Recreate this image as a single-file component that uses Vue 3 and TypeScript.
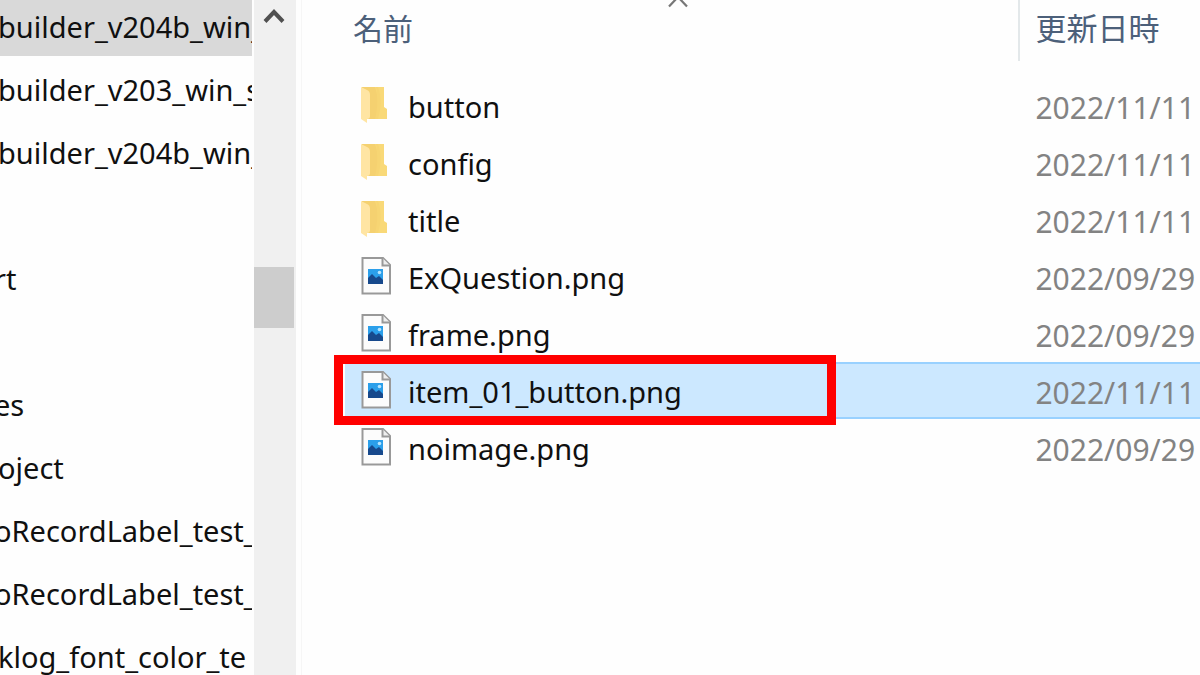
<script setup lang="ts">
interface TreeRow {
  label: string
  clipped?: boolean
  selected?: boolean
}
interface FileRow {
  name: string
  kind: 'folder' | 'image'
  date: string
  selected?: boolean
}

const tree: TreeRow[] = [
  { label: 'builder_v204b_win_', selected: true },
  { label: 'builder_v203_win_s' },
  { label: 'builder_v204b_win_' },
  { label: '' },
  { label: 'rt', clipped: true },
  { label: '' },
  { label: 'es', clipped: true },
  { label: 'oject' },
  { label: 'oRecordLabel_test_', clipped: true },
  { label: 'oRecordLabel_test_', clipped: true },
  { label: 'klog_font_color_te' },
]

const files: FileRow[] = [
  { name: 'button', kind: 'folder', date: '2022/11/11' },
  { name: 'config', kind: 'folder', date: '2022/11/11' },
  { name: 'title', kind: 'folder', date: '2022/11/11' },
  { name: 'ExQuestion.png', kind: 'image', date: '2022/09/29' },
  { name: 'frame.png', kind: 'image', date: '2022/09/29' },
  { name: 'item_01_button.png', kind: 'image', date: '2022/11/11', selected: true },
  { name: 'noimage.png', kind: 'image', date: '2022/09/29' },
]
</script>

<template>
  <div class="explorer">
    <nav class="tree">
      <ul>
        <li v-for="(row, i) in tree" :key="i" :class="{ selected: row.selected, clipped: row.clipped }">
          <span>{{ row.label }}</span>
        </li>
      </ul>
    </nav>
    <div class="scrollbar">
      <button class="arrow" type="button" aria-label="Scroll up">
        <svg width="22" height="16" viewBox="0 0 22 16">
          <path d="M2 13.5 L11 4 L20 13.5" fill="none" stroke="#505050" stroke-width="4" />
        </svg>
      </button>
      <div class="thumb"></div>
    </div>
    <main class="files">
      <table>
        <thead>
          <tr>
            <th class="name" scope="col" aria-sort="ascending">
              名前
              <svg class="sort" width="22" height="8" viewBox="0 0 22 8">
                <path d="M2 6.5 L11 -3 L20 6.5" fill="none" stroke="#777" stroke-width="2.2" />
              </svg>
            </th>
            <th class="date" scope="col">更新日時</th>
          </tr>
        </thead>
        <tbody>
          <tr v-for="file in files" :key="file.name" :class="{ selected: file.selected }">
            <td class="name">
              <div class="entry">
                <svg v-if="file.kind === 'folder'" class="icon" width="30" height="38" viewBox="0 0 30 38">
                  <path d="M1 1 H23 V21 L26 23 V33 H7 L1 30 Z" fill="#f9d978" />
                  <path d="M1 1 H14 C17 9 18 21 15 33 H6 Z" fill="#f5d170" />
                  <path d="M15 1 H17 C21 12 20 22 17 33 H14 C17 22 17 10 15 1 Z" fill="#f7d573" />
                  <path d="M0 1 L6 4 Q9 5 9 9 V30 Q9 33 6 33 V37 L0 33 Z" fill="#ffe5a3" />
                </svg>
                <svg v-else class="icon" width="30" height="38" viewBox="0 0 30 38">
                  <path d="M1.5 1 H22 L29 8 V36.5 H1.5 Z" fill="#fcfcfc" stroke="#999" stroke-width="2" />
                  <path d="M21.5 1 V8.5 H29" fill="#eee" stroke="#999" stroke-width="2" />
                  <rect x="7" y="12" width="15" height="15" fill="#2b9fea" />
                  <path d="M7 21 L11 17 L15 21 L18 19 L22 23 V27 H7 Z" fill="#17498c" />
                  <circle cx="18.5" cy="15.5" r="1.8" fill="#b5e4ff" />
                </svg>
                <span>{{ file.name }}</span>
                <div v-if="file.selected" class="marker"></div>
              </div>
            </td>
            <td class="date">{{ file.date }}</td>
          </tr>
        </tbody>
      </table>
    </main>
  </div>
</template>

<style>
body {
  margin: 0;
  overflow: hidden;
  background: #fefefe;
}
</style>

<style scoped>
.explorer {
  display: flex;
  height: 100vh;
  overflow: hidden;
  font-family: "Noto Sans", "Noto Sans CJK JP", sans-serif;
  font-size: 29px;
  line-height: 40px;
  color: #101010;
}
.tree {
  flex: 0 0 21%;
  overflow: hidden;
}
.tree ul {
  list-style: none;
  margin: -7px 0 0;
  padding: 0;
}
.tree li {
  display: flex;
  align-items: center;
  box-sizing: border-box;
  height: 63px;
  padding-top: 5px;
  white-space: nowrap;
}
.tree li.selected {
  background: #d9d9d9;
}
.tree li span {
  margin-left: -2px;
}
.tree li.clipped span {
  margin-left: -6px;
}
.scrollbar {
  flex: 0 0 42px;
  margin-left: 2px;
  background: #f0f0f0;
}
.arrow {
  display: flex;
  align-items: center;
  justify-content: center;
  width: 40px;
  height: 32px;
  padding: 0;
  border: 0;
  background: none;
}
.thumb {
  width: 40px;
  height: 61px;
  margin-top: 235px;
  background: #cdcdcd;
}
.files {
  flex: 1;
  min-width: 0;
  margin-left: 5px;
  padding-left: 43px;
  border-left: 1px solid #f6f6f6;
}
table {
  width: 100%;
  table-layout: fixed;
  border-collapse: separate;
  border-spacing: 0;
}
th,
td {
  padding: 0;
  text-align: left;
  white-space: nowrap;
}
th {
  position: relative;
  box-sizing: border-box;
  height: 61px;
  padding-bottom: 8px;
  font-family: "Noto Sans CJK JP", sans-serif;
  font-size: 30px;
  font-weight: 400;
  color: #4c607a;
}
th.name {
  width: 79%;
  padding-left: 8px;
  border-right: 2px solid #e3e8ea;
}
th.date {
  font-size: 31px;
}
.sort {
  position: absolute;
  top: 0;
  left: 322px;
}
.date {
  padding-left: 15px;
}
td.date {
  font-size: 30px;
  color: #838383;
}
tbody::before {
  content: "";
  display: block;
  height: 16px;
}
td {
  box-sizing: border-box;
  height: 57px;
  border: 0 solid #99d1ff;
}
.selected td {
  background: #cce8ff;
  border-width: 2px 0;
}
.entry {
  position: relative;
  display: flex;
  align-items: center;
  gap: 17px;
  padding: 0 0 2px 16px;
}
.entry span,
td.date {
  padding-top: 4px;
}
.icon {
  flex: none;
}
.marker {
  position: absolute;
  top: -13px;
  left: -11px;
  box-sizing: border-box;
  width: 502px;
  height: 70px;
  border: 9px solid #f00;
}
</style>
